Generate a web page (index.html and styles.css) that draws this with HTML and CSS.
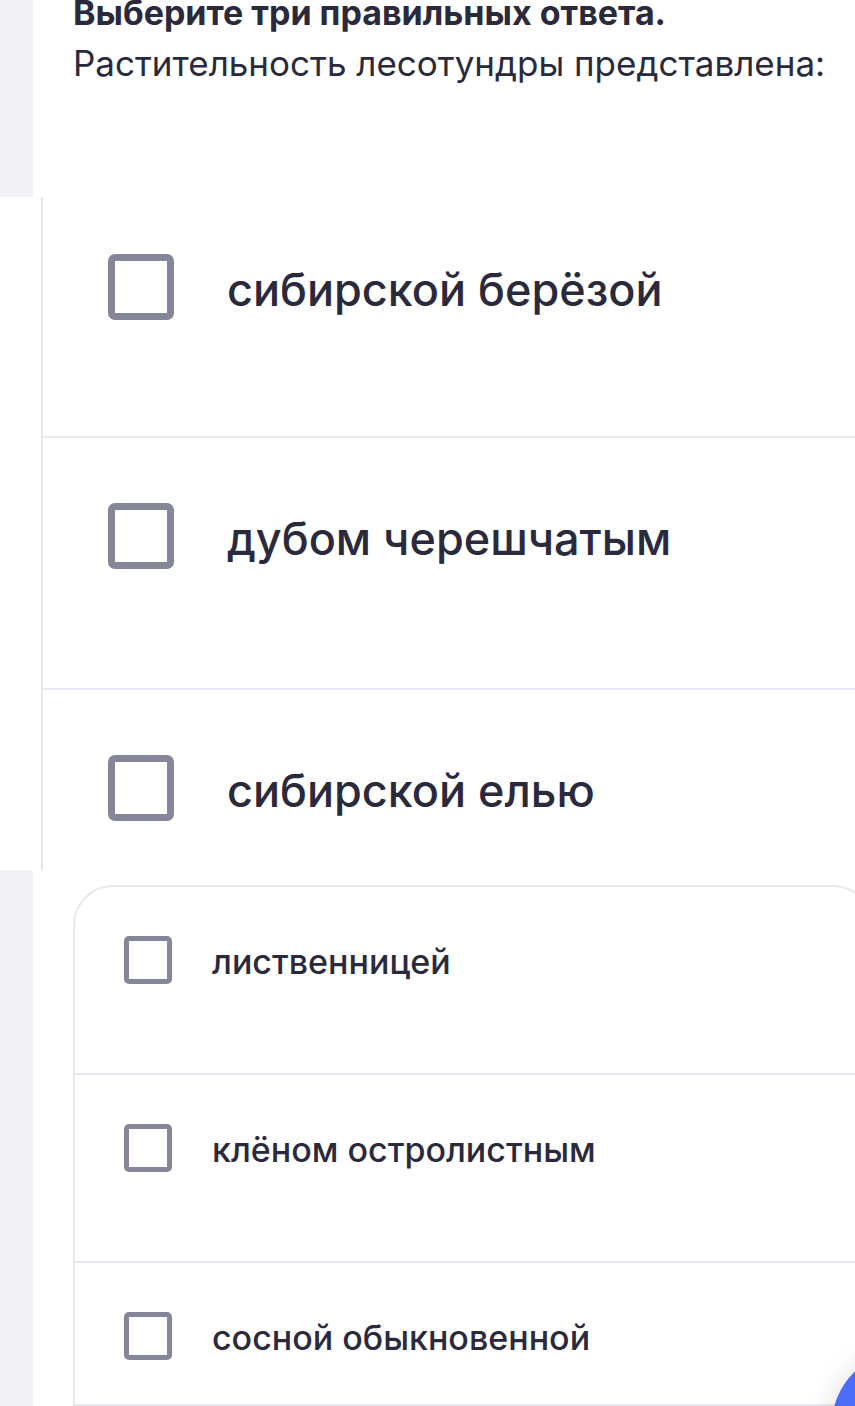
FILE: index.html
```html
<!DOCTYPE html>
<html lang="ru">
<head>
<meta charset="utf-8">
<link rel="stylesheet" href="styles.css">
</head>
<body>
<div class="page">
  <section class="top">
    <div class="strip"></div>
    <div class="question">
      <div class="q-title">Выберите три правильных ответа.</div>
      <div class="q-text">Растительность лесотундры представлена:</div>
    </div>
  </section>

  <section class="zoomed">
    <div class="zrow zrow-first"><span class="box big"></span><span class="zlabel">сибирской берёзой</span></div>
    <div class="zrow"><span class="box big"></span><span class="zlabel">дубом черешчатым</span></div>
    <div class="zrow zrow-last"><span class="box big"></span><span class="zlabel">сибирской елью</span></div>
  </section>

  <section class="bottom">
    <div class="strip"></div>
    <div class="gap"></div>
    <div class="card">
      <div class="row"><span class="box small"></span><span class="label">лиственницей</span></div>
      <div class="row"><span class="box small"></span><span class="label">клёном остролистным</span></div>
      <div class="row"><span class="box small"></span><span class="label">сосной обыкновенной</span></div>
    </div>
  </section>
</div>
<div class="fab"></div>
</body>
</html>
```

FILE: styles.css
```css
html, body {
  margin: 0;
  padding: 0;
  background: #ffffff;
  overflow: hidden;
}
body {
  width: 855px;
  height: 1406px;
  position: relative;
  color: #2a2a3c;
  font-family: Inter, "Noto Sans", sans-serif;
}
.page {
  display: flex;
  flex-direction: column;
  height: 1406px;
  overflow: hidden;
}
.strip {
  width: 33px;
  background: #f2f2f7;
  flex: none;
}
.top {
  display: flex;
  height: 197px;
  flex: none;
}
.question {
  padding-left: 40px;
  white-space: nowrap;
}
.q-title {
  font-weight: 700;
  font-size: 34px;
  line-height: 34px;
  margin-top: -4px;
}
.q-text {
  font-size: 35px;
  line-height: 42px;
  margin-top: 12px;
  font-weight: 400;
}
.zoomed {
  height: 673px;
  flex: none;
  margin-left: 41px;
  border-left: 2px solid #e6e6ee;
  display: flex;
  flex-direction: column;
  overflow: hidden;
}
.zrow {
  height: 252px;
  border-bottom: 2px solid #e8e8f0;
  display: flex;
  align-items: flex-start;
  padding-left: 65px;
  padding-top: 65px;
  box-sizing: border-box;
  gap: 53px;
  flex: none;
}
.zrow-first {
  height: 241px;
  padding-top: 57px;
}
.zrow-last {
  height: 180px;
  border-bottom: none;
}
.box {
  display: block;
  box-sizing: border-box;
  flex: none;
  border-style: solid;
  border-color: #868699;
  background: #fff;
}
.box.big {
  width: 66px;
  height: 66px;
  border-width: 7px;
  border-radius: 7px;
}
.box.small {
  width: 48px;
  height: 48px;
  border-width: 5px;
  border-radius: 5px;
}
.zlabel {
  font-family: Inter, "Noto Sans", sans-serif;
  font-size: 45px;
  line-height: 72px;
  font-weight: 500;
  white-space: nowrap;
}
.bottom {
  display: flex;
  height: 536px;
  flex: none;
}
.bottom .strip {
  height: 100%;
}
.gap {
  width: 40px;
  flex: none;
}
.card {
  flex: none;
  width: 800px;
  margin-top: 15px;
  border: 2px solid #e8e8ee;
  border-radius: 40px 40px 0 0;
  display: flex;
  flex-direction: column;
  box-sizing: border-box;
}
.row {
  height: 188px;
  flex: none;
  box-sizing: border-box;
  border-bottom: 2px solid #e8e8f0;
  display: flex;
  align-items: flex-start;
  padding-left: 49px;
  padding-top: 49px;
  gap: 40px;
}
.row:last-child {
  border-bottom: none;
}
.label {
  font-family: Inter, "Noto Sans", sans-serif;
  font-size: 34px;
  line-height: 52px;
  font-weight: 500;
  white-space: nowrap;
}
.fab {
  position: absolute;
  left: 832px;
  top: 1352px;
  width: 145px;
  height: 145px;
  border-radius: 50%;
  background: #4a6cf6;
  box-shadow: 0 0 30px rgba(0, 0, 0, 0.12);
}
```
